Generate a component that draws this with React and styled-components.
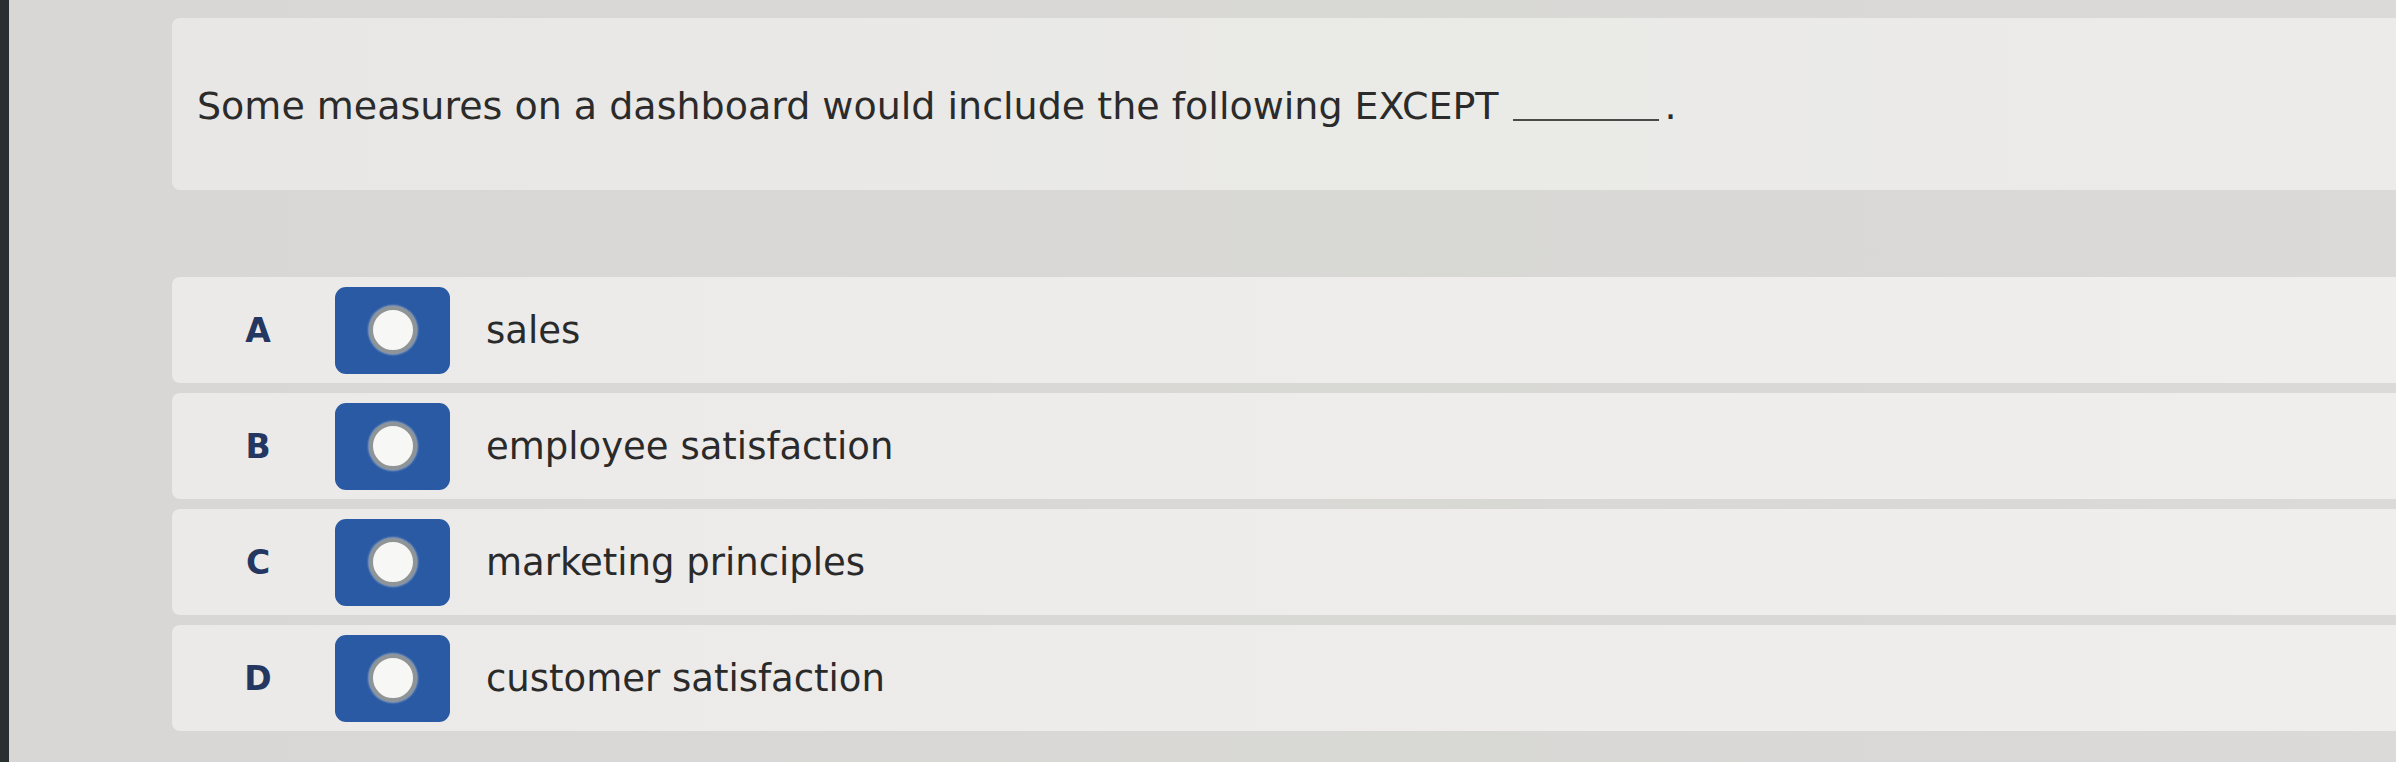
import React from "react";
import styled, { createGlobalStyle } from "styled-components";

const Global = createGlobalStyle`
  html, body { margin: 0; padding: 0; }
  body {
    background: #d8d7d5;
    font-family: "DejaVu Sans", Verdana, sans-serif;
    overflow: hidden;
  }
`;

const Screen = styled.div`
  width: 2396px;
  height: 762px;
  box-sizing: border-box;
  border-left: 9px solid #2a2f31;
  background: linear-gradient(90deg, #d9d7d6 0%, #d8d8d5 60%, #dcd9d9 100%);
  padding: 18px 0 0 163px;
  display: flex;
  flex-direction: column;
`;

const QuestionCard = styled.div`
  height: 172px;
  box-sizing: border-box;
  background: linear-gradient(90deg, #e8e7e6 0%, #eaeae7 60%, #ecebea 100%);
  border-radius: 8px 0 0 8px;
  padding: 69px 0 0 25px;
  font-size: 38px;
  color: #2b2b2b;
  line-height: 1;
`;

const Blank = styled.span`
  display: inline-block;
  width: 146px;
  margin-left: 14px;
  margin-right: 6px;
  border-bottom: 2px solid #4a4a4a;
  vertical-align: baseline;
  height: 1px;
  position: relative;
  top: 2px;
`;

const Options = styled.div`
  margin-top: 87px;
  display: flex;
  flex-direction: column;
  gap: 10px;
`;

const OptionRow = styled.div`
  height: 106px;
  box-sizing: border-box;
  background: linear-gradient(90deg, #ebeae9 0%, #eeedeb 60%, #f0eeed 100%);
  border-radius: 8px 0 0 8px;
  display: flex;
  align-items: center;
  padding-left: 60px;
`;

const Letter = styled.div`
  width: 52px;
  text-align: center;
  font-weight: bold;
  font-size: 33px;
  color: #243760;
`;

const RadioBox = styled.div`
  margin-left: 51px;
  width: 115px;
  height: 87px;
  border-radius: 11px;
  background: #2a5aa3;
  display: flex;
  align-items: center;
  justify-content: center;
  flex-shrink: 0;
`;

const Ring = styled.div`
  width: 40px;
  height: 40px;
  border-radius: 50%;
  background: #f7f7f5;
  border: 4px solid #8f9496;
  box-shadow: 0 0 2px 1px rgba(200, 205, 215, 0.6);
`;

const OptionText = styled.div`
  margin-left: 36px;
  font-size: 37px;
  color: #2a2a2a;
`;

const options = [
  ["A", "sales"],
  ["B", "employee satisfaction"],
  ["C", "marketing principles"],
  ["D", "customer satisfaction"],
];

export default function App() {
  return (
    <>
      <Global />
      <Screen>
        <QuestionCard>
          Some measures on a dashboard would include the following EXCEPT
          <Blank />.
        </QuestionCard>
        <Options>
          {options.map(([l, t]) => (
            <OptionRow key={l}>
              <Letter>{l}</Letter>
              <RadioBox>
                <Ring />
              </RadioBox>
              <OptionText>{t}</OptionText>
            </OptionRow>
          ))}
        </Options>
      </Screen>
    </>
  );
}
